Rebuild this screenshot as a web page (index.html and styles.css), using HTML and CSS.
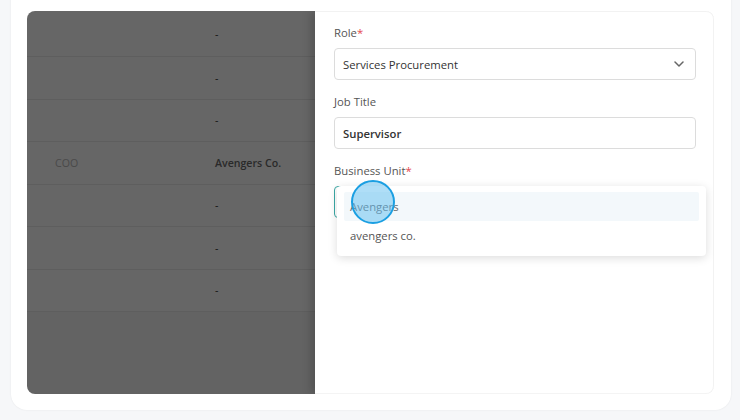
FILE: index.html
```html
<!DOCTYPE html>
<html lang="en">
<head>
    <meta charset="UTF-8">
    <meta name="viewport" content="width=device-width, initial-scale=1.0">
    <title>Edit user</title>
    <link rel="stylesheet" href="styles.css">
</head>
<body>
    <div class="card">
        <div class="workspace">
            <div class="table-area">
                <div class="row first"><span class="cell"></span><span class="cell">-</span></div>
                <div class="row"><span class="cell"></span><span class="cell">-</span></div>
                <div class="row"><span class="cell"></span><span class="cell">-</span></div>
                <div class="row"><span class="cell muted">COO</span><span class="cell strong">Avengers Co.</span></div>
                <div class="row"><span class="cell"></span><span class="cell">-</span></div>
                <div class="row"><span class="cell"></span><span class="cell">-</span></div>
                <div class="row"><span class="cell"></span><span class="cell">-</span></div>
                <div class="overlay"></div>
            </div>

            <aside class="drawer">
                <div class="field">
                    <label>Role<span class="req">*</span></label>
                    <div class="control select">
                        <span>Services Procurement</span>
                        <svg class="chevron" width="10" height="6" viewBox="0 0 10 6">
                            <path d="M1 1l4 4 4-4" fill="none" stroke="#666" stroke-width="1.5" stroke-linecap="round" stroke-linejoin="round"/>
                        </svg>
                    </div>
                </div>
                <div class="field">
                    <label>Job Title</label>
                    <div class="control value">Supervisor</div>
                </div>
                <div class="field bu">
                    <label>Business Unit<span class="req">*</span></label>
                    <div class="control focused"></div>
                    <ul class="dropdown">
                        <li class="active">Avengers</li>
                        <li>avengers co.</li>
                    </ul>
                    <span class="click-dot"></span>
                </div>
            </aside>
        </div>
    </div>
</body>
</html>
```

FILE: styles.css
```css
body {
    margin: 0;
    padding: 0 9px 0 11px;
    background-color: #f6f7f9;
    font-family: "Open Sans", "Liberation Sans", sans-serif;
    height: 420px;
    overflow: hidden;
}
.card {
    margin-top: -16px;
    padding: 27px 17px 16px 16px;
    background-color: #ffffff;
    border-radius: 16px;
    box-shadow: 0 0 2px rgba(0, 0, 0, 0.08);
}
.workspace {
    display: flex;
    height: 383px;
    border-radius: 8px;
    overflow: hidden;
}
.table-area {
    position: relative;
    flex: 1;
    background-color: #f8f8f8;
    font-size: 10.6px;
}
.row {
    display: flex;
    align-items: center;
    height: 42.5px;
    background-color: #ffffff;
    border-bottom: 1px solid #ececec;
    box-sizing: border-box;
}
.row.first {
    height: 46px;
}
.cell {
    color: #333333;
}
.cell:first-child {
    width: 160px;
    padding-left: 28px;
}
.cell.muted {
    color: #b8b8b8;
}
.cell.strong {
    font-weight: 600;
    color: #6a6a6a;
}
.overlay {
    position: absolute;
    inset: 0;
    background-color: rgba(0, 0, 0, 0.6);
}
.drawer {
    position: relative;
    width: 399px;
    padding: 13px 18px 0 19px;
    box-sizing: border-box;
    background-color: #ffffff;
    border-radius: 0 8px 8px 0;
    box-shadow: -4px 0 10px rgba(0, 0, 0, 0.18), inset 0 1px 0 #f2f2f2, inset -1px 0 0 #f2f2f2, inset 0 -1px 0 #f4f4f4;
}
.field {
    margin-bottom: 13px;
}
.field label {
    display: block;
    font-size: 11.3px;
    line-height: 18px;
    color: #555555;
    margin-bottom: 6px;
}
.req {
    color: #e5484d;
}
.control {
    display: flex;
    align-items: center;
    justify-content: space-between;
    height: 32px;
    padding: 0 11px 0 8px;
    border: 1px solid #dcdcdc;
    border-radius: 4px;
    box-sizing: border-box;
    font-size: 11.3px;
    color: #333333;
}
.control.value {
    font-weight: 600;
}
.control.focused {
    border-color: #3ba8a5;
}
.bu {
    position: relative;
}
.dropdown {
    position: absolute;
    top: 24px;
    left: 3px;
    right: -10px;
    margin: 0;
    padding: 6px 7px;
    list-style: none;
    background-color: #ffffff;
    border-radius: 4px;
    box-shadow: 0 2px 10px rgba(0, 0, 0, 0.14);
}
.dropdown li {
    height: 29px;
    line-height: 29px;
    padding-left: 6px;
    font-size: 11.3px;
    color: #555555;
    border-radius: 2px;
}
.dropdown li.active {
    background-color: #f3f8fb;
    color: #6a6a6a;
}
.click-dot {
    position: absolute;
    top: 18px;
    left: 17px;
    width: 40px;
    height: 40px;
    border: 2px solid #1b9fe2;
    border-radius: 50%;
    background-color: rgba(96, 190, 240, 0.5);
}
```
